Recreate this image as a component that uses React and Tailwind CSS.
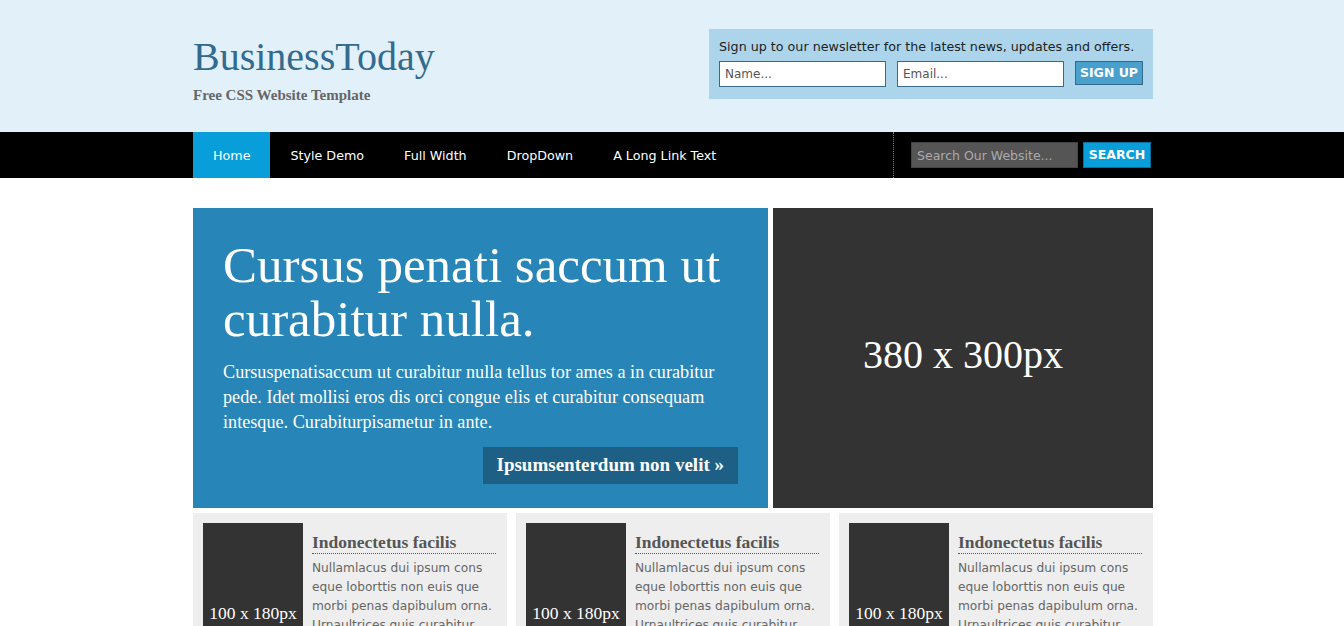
import { useState } from "react";

const serif = "font-['Liberation_Serif','DejaVu_Serif',serif]";
const sans = "font-['DejaVu_Sans','Liberation_Sans',sans-serif]";

const navItems = ["Home", "Style Demo", "Full Width", "DropDown", "A Long Link Text"];

function Card() {
  return (
    <div className="w-[314px] bg-[#eeeeee] p-[10px] flex gap-[9px] h-[140px] overflow-hidden">
      <div className="w-[100px] h-[180px] shrink-0 bg-[#333333] flex items-center justify-center">
        <span className={`${serif} text-white text-[17.5px] pt-[1px]`}>100 x 180px</span>
      </div>
      <div className="flex-1 pt-[9px] pr-[1px]">
        <h3 className={`${serif} font-bold text-[17.5px] text-[#555555] leading-[20px] pb-[1px] border-b border-dotted border-[#555555]`}>
          Indonectetus facilis
        </h3>
        <p className={`${sans} text-[12.2px] leading-[19px] text-[#666666] mt-[5px]`}>
          Nullamlacus dui ipsum cons eque loborttis non euis que morbi penas dapibulum orna. Urnaultrices quis curabitur.
        </p>
      </div>
    </div>
  );
}

export default function App() {
  const [active, setActive] = useState("Home");

  return (
    <div className="min-h-screen bg-white">
      {/* Header */}
      <div className="bg-[#e2f0f9] h-[132px] pl-[2px]">
        <div className="w-[960px] mx-auto flex justify-between pt-[29px]">
          <div className="pt-[6px]">
            <h1 className={`${serif} text-[40px] leading-[44px] text-[#336b8f]`}>BusinessToday</h1>
            <p className={`${serif} font-bold text-[15px] text-[#666666] mt-[5px]`}>Free CSS Website Template</p>
          </div>
          <div className="w-[444px] h-[70px] bg-[#acd5ec] px-[10px] pt-[10px]">
            <p className={`${sans} text-[12.7px] text-[#222222] leading-[16px]`}>
              Sign up to our newsletter for the latest news, updates and offers.
            </p>
            <div className="flex items-start gap-[11px] mt-[6px]">
              <input
                placeholder="Name..."
                className={`${sans} w-[167px] h-[26px] bg-white border border-[#3a6a8a] px-[5px] text-[12px] placeholder:text-[#555555] outline-none`}
              />
              <input
                placeholder="Email..."
                className={`${sans} w-[167px] h-[26px] bg-white border border-[#3a6a8a] px-[5px] text-[12px] placeholder:text-[#555555] outline-none`}
              />
              <button className={`${sans} w-[68px] h-[24px] bg-[#4aa0cc] border border-[#336a8a] text-white font-bold text-[12.5px]`}>
                SIGN UP
              </button>
            </div>
          </div>
        </div>
      </div>

      {/* Nav */}
      <div className="bg-black h-[46px] pl-[2px]">
        <div className="w-[960px] mx-auto flex h-full">
          <nav className="flex flex-1 h-full">
            {navItems.map((item) => (
              <button
                key={item}
                onClick={() => setActive(item)}
                className={`${sans} h-full px-[20px] pt-[2px] text-[12.7px] text-white ${active === item ? "bg-[#079ed9]" : ""}`}
              >
                {item}
              </button>
            ))}
          </nav>
          <div className="w-[260px] border-l border-dotted border-[#777777] flex items-center pl-[17px] gap-[5px]">
            <input
              placeholder="Search Our Website..."
              className={`${sans} w-[167px] h-[26px] bg-[#555555] border border-[#444444] px-[5px] text-[12.5px] text-white placeholder:text-[#aaaaaa] outline-none`}
            />
            <button className={`${sans} w-[68px] h-[26px] bg-[#079ed9] border border-[#0a6fa0] text-white font-bold text-[12.5px]`}>
              SEARCH
            </button>
          </div>
        </div>
      </div>

      {/* Main */}
      <div className="pl-[2px]">
        <div className="w-[960px] mx-auto pt-[30px]">
          <div className="flex gap-[5px]">
            <div className="w-[575px] h-[300px] bg-[#2785b8] px-[30px] pt-[30px] flex flex-col">
              <h2 className={`${serif} text-white text-[51px] leading-[54px]`}>
                Cursus penati saccum ut curabitur nulla.
              </h2>
              <p className={`${serif} text-white text-[18.2px] leading-[25px] mt-[14px]`}>
                Cursuspenatisaccum ut curabitur nulla tellus tor ames a in curabitur pede. Idet mollisi eros dis orci congue elis et curabitur consequam intesque. Curabiturpisametur in ante.
              </p>
              <div className="flex justify-end mt-[12px]">
                <button className={`${serif} bg-[#1e5f85] text-white font-bold text-[19px] h-[37px] px-[14px]`}>
                  Ipsumsenterdum non velit »
                </button>
              </div>
            </div>
            <div className="w-[380px] h-[300px] bg-[#333333] flex items-center justify-center pb-[6px]">
              <span className={`${serif} text-white text-[40px]`}>380 x 300px</span>
            </div>
          </div>
          <div className="flex justify-between mt-[5px]">
            <Card />
            <Card />
            <Card />
          </div>
        </div>
      </div>
    </div>
  );
}
